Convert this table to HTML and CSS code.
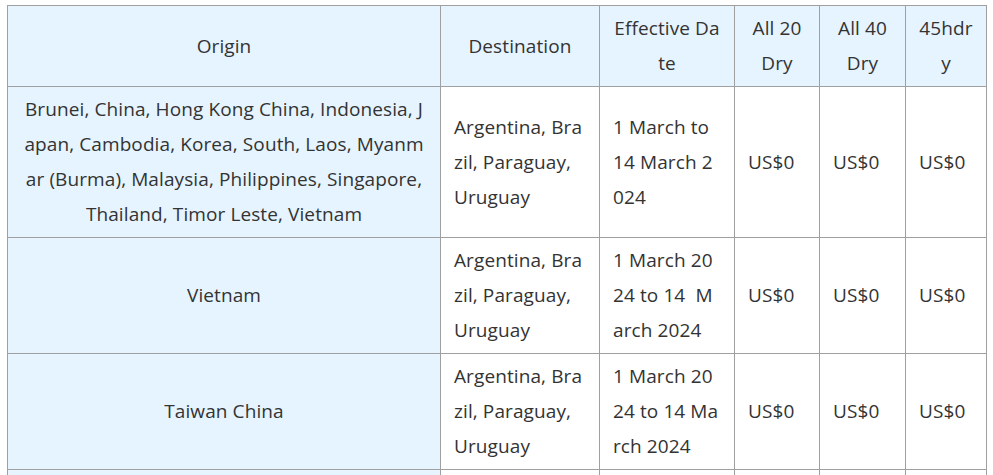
FILE: index.html
```html
<!DOCTYPE html>
<html lang="en">
<head>
<meta charset="utf-8">
<title>Rates</title>
<link rel="stylesheet" href="styles.css">
</head>
<body>
<table class="rates">
  <colgroup>
    <col class="c-origin">
    <col class="c-dest">
    <col class="c-date">
    <col class="c-20">
    <col class="c-40">
    <col class="c-45">
  </colgroup>
  <thead>
    <tr>
      <th>Origin</th>
      <th>Destination</th>
      <th>Effective Date</th>
      <th>All 20 Dry</th>
      <th>All 40 Dry</th>
      <th>45hdry</th>
    </tr>
  </thead>
  <tbody>
    <tr>
      <td class="origin">Brunei, China, Hong Kong China, Indonesia, Japan, Cambodia, Korea, South, Laos, Myanmar (Burma), Malaysia, Philippines, Singapore, Thailand, Timor Leste, Vietnam</td>
      <td>Argentina, Brazil, Paraguay, Uruguay</td>
      <td>1 March to 14 March 2024</td>
      <td>US$0</td>
      <td>US$0</td>
      <td>US$0</td>
    </tr>
    <tr>
      <td class="origin">Vietnam</td>
      <td>Argentina, Brazil, Paraguay, Uruguay</td>
      <td>1 March 2024 to 14&nbsp; March 2024</td>
      <td>US$0</td>
      <td>US$0</td>
      <td>US$0</td>
    </tr>
    <tr>
      <td class="origin">Taiwan China</td>
      <td>Argentina, Brazil, Paraguay, Uruguay</td>
      <td>1 March 2024 to 14 March 2024</td>
      <td>US$0</td>
      <td>US$0</td>
      <td>US$0</td>
    </tr>
    <tr>
      <td class="origin">India, Pakistan, Sri Lanka, Bangladesh</td>
      <td>Argentina, Brazil, Paraguay, Uruguay</td>
      <td>1 March 2024 to 14 March 2024</td>
      <td>US$0</td>
      <td>US$0</td>
      <td>US$0</td>
    </tr>
  </tbody>
</table>
</body>
</html>
```
FILE: styles.css
```css
html, body {
  margin: 0;
  padding: 0;
  background: #ffffff;
}
body {
  padding: 5px 7px 0 7px;
  font-family: "Open Sans", "Noto Sans", sans-serif;
  font-size: 19px;
  letter-spacing: 0.1px;
  color: #333333;
}
.rates {
  width: 979px;
  border-collapse: collapse;
  table-layout: fixed;
}
.c-origin { width: 433px; }
.c-dest { width: 159px; }
.c-date { width: 135px; }
.c-20 { width: 85px; }
.c-40 { width: 86px; }
.c-45 { width: 81px; }
.rates th,
.rates td {
  border: 1px solid #a0a0a0;
  padding: 5px 13px;
  line-height: 35px;
  word-break: break-all;
  vertical-align: middle;
}
.rates th {
  background: #e6f4ff;
  font-weight: normal;
  text-align: center;
}
.rates td {
  text-align: left;
  background: #ffffff;
}
.rates td.origin {
  background: #e6f4ff;
  text-align: center;
}
```
